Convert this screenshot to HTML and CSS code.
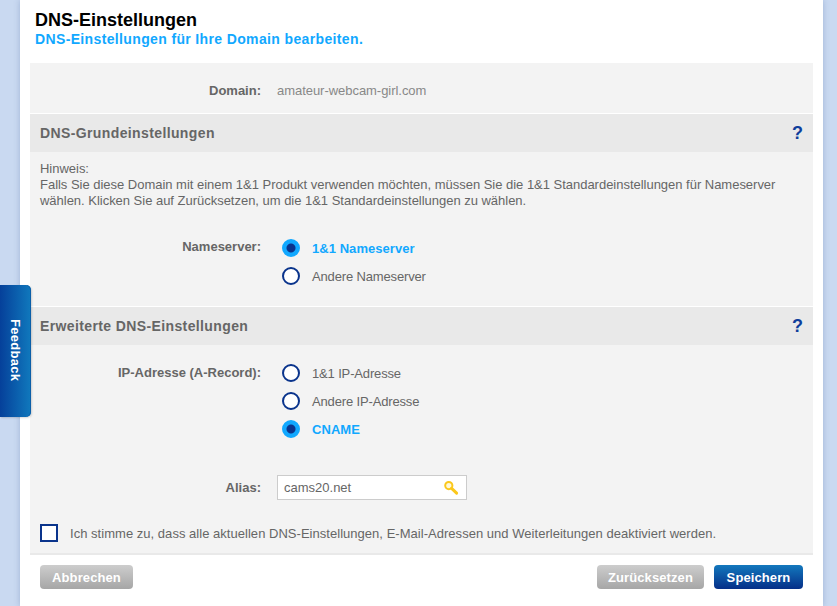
FILE: index.html
```html
<!DOCTYPE html>
<html lang="de">
<head>
    <meta charset="UTF-8">
    <title>DNS-Einstellungen</title>
    <link rel="stylesheet" href="styles.css">
</head>
<body>
    <a class="feedback" href="#"><span>Feedback</span></a>

    <div class="container">
        <div class="page-head">
            <h1>DNS-Einstellungen</h1>
            <p>DNS-Einstellungen für Ihre Domain bearbeiten.</p>
        </div>

        <div class="panel">
            <div class="row row-domain">
                <div class="label">Domain:</div>
                <div class="value">amateur-webcam-girl.com</div>
            </div>

            <div class="section-head">
                <h2>DNS-Grundeinstellungen</h2>
                <a class="help" href="#">?</a>
            </div>
            <div class="hint">
                Hinweis:<br>
                Falls Sie diese Domain mit einem 1&amp;1 Produkt verwenden möchten, müssen Sie die 1&amp;1 Standardeinstellungen für Nameserver wählen. Klicken Sie auf Zurücksetzen, um die 1&amp;1 Standardeinstellungen zu wählen.
            </div>
            <div class="row row-ns">
                <div class="label">Nameserver:</div>
                <div class="options">
                    <div class="option active"><span class="radio"></span>1&amp;1 Nameserver</div>
                    <div class="option"><span class="radio"></span>Andere Nameserver</div>
                </div>
            </div>

            <div class="section-head">
                <h2>Erweiterte DNS-Einstellungen</h2>
                <a class="help" href="#">?</a>
            </div>
            <div class="row row-ip">
                <div class="label">IP-Adresse (A-Record):</div>
                <div class="options">
                    <div class="option"><span class="radio"></span>1&amp;1 IP-Adresse</div>
                    <div class="option"><span class="radio"></span>Andere IP-Adresse</div>
                    <div class="option active"><span class="radio"></span>CNAME</div>
                </div>
            </div>
            <div class="row row-alias">
                <div class="label">Alias:</div>
                <div class="alias-box">
                    <span>cams20.net</span>
                    <svg class="key" width="16" height="16" viewBox="0 0 16 16">
                        <circle cx="5.8" cy="5.6" r="3.6" fill="#fff8d8" stroke="#fbc81c" stroke-width="2"/>
                        <path d="M8.6 8.4 L13.6 13.2" stroke="#fbc81c" stroke-width="3" stroke-linecap="round"/>
                    </svg>
                </div>
            </div>
            <div class="confirm">
                <span class="checkbox"></span>
                Ich stimme zu, dass alle aktuellen DNS-Einstellungen, E-Mail-Adressen und Weiterleitungen deaktiviert werden.
            </div>
        </div>

        <div class="buttons">
            <button class="btn btn-grey btn-cancel">Abbrechen</button>
            <div class="buttons-right">
                <button class="btn btn-grey btn-reset">Zurücksetzen</button>
                <button class="btn btn-blue btn-save">Speichern</button>
            </div>
        </div>
    </div>
</body>
</html>
```

FILE: styles.css
```css
html, body {
    margin: 0;
    height: 606px;
    overflow: hidden;
}

body {
    font-family: "Liberation Sans", Arial, sans-serif;
    font-size: 13px;
    color: #666;
    background-color: #c9d9f1;
}

.container {
    position: relative;
    width: 803px;
    height: 606px;
    margin-left: 20px;
    padding: 0 10px;
    box-sizing: border-box;
    background-color: #fff;
    box-shadow: 0 0 6px rgba(60,90,150,0.3);
}

.page-head {
    height: 63px;
    padding: 10px 5px 0;
    box-sizing: border-box;
}

h1 {
    margin: 0;
    font-size: 18px;
    line-height: 20px;
    color: #000;
}

.page-head p {
    margin: 0;
    font-size: 14px;
    line-height: 18px;
    font-weight: bold;
    letter-spacing: 0.36px;
    color: #11a8ff;
}

.panel {
    background-color: #f3f3f3;
    border-bottom: 2px solid #e9e9e9;
}

.row {
    display: flex;
}

.label {
    width: 231px;
    text-align: right;
    font-weight: bold;
    flex-shrink: 0;
}

.row-domain {
    height: 51px;
    padding-top: 20px;
    box-sizing: border-box;
    line-height: 15px;
    border-bottom: 1px solid #fff;
}

.value {
    margin-left: 16px;
    color: #888;
    letter-spacing: -0.04px;
}

.section-head {
    display: flex;
    justify-content: space-between;
    align-items: center;
    height: 38px;
    padding: 0 10px;
    background-color: #e9e9e9;
}

h2 {
    margin: 0;
    font-size: 14px;
    letter-spacing: 0.38px;
    color: #666;
}

.help {
    font-size: 18px;
    font-weight: bold;
    color: #0f3f9c;
    text-decoration: none;
}

.hint {
    padding: 9px 10px 0;
    height: 59px;
    line-height: 16px;
    letter-spacing: -0.02px;
}

.row-ns {
    height: 87px;
    padding-top: 14px;
    box-sizing: border-box;
    border-bottom: 1px solid #fff;
}

.row-ns .label {
    line-height: 26px;
}

.row-ip .label {
    line-height: 28px;
}

.options {
    margin-left: 21px;
}

.option {
    display: flex;
    align-items: center;
    height: 28px;
    letter-spacing: -0.15px;
}

.radio {
    width: 14px;
    height: 14px;
    margin-right: 12px;
    border: 2px solid #0a348c;
    border-radius: 50%;
    background-color: #fff;
}

.option.active {
    font-weight: bold;
    letter-spacing: 0.05px;
    color: #11a8ff;
}

.option.active .radio {
    border-color: #11a8ff;
    background: radial-gradient(circle, #0a348c 0, #0a348c 4px, #11a8ff 5px);
}

.row-ip {
    height: 116px;
    padding-top: 14px;
    box-sizing: border-box;
}

.row-alias {
    height: 52px;
    align-items: center;
}

.alias-box {
    display: flex;
    justify-content: space-between;
    align-items: center;
    width: 190px;
    height: 25px;
    margin-top: 1px;
    margin-left: 16px;
    padding: 0 7px 0 6px;
    box-sizing: border-box;
    border: 1px solid #ccc;
    background-color: #fff;
}

.confirm {
    display: flex;
    align-items: center;
    height: 40px;
    padding-left: 10px;
    box-sizing: border-box;
    letter-spacing: 0.03px;
}

.checkbox {
    width: 14px;
    height: 14px;
    margin-right: 12px;
    border: 2px solid #0a348c;
    background-color: #fff;
}

.buttons {
    display: flex;
    justify-content: space-between;
    padding: 10px 10px 0;
}

.buttons-right {
    display: flex;
    gap: 10px;
}

.btn {
    height: 24px;
    padding: 0;
    border: none;
    border-radius: 4px;
    font-family: inherit;
    font-size: 13px;
    font-weight: bold;
    letter-spacing: 0.1px;
    color: #fff;
    cursor: pointer;
}

.btn-cancel { width: 93px; }
.btn-reset { width: 107px; }
.btn-save { width: 89px; }

.btn-grey {
    background: linear-gradient(#cdcdcd, #a6a6a6);
}

.btn-blue {
    background: linear-gradient(#1378bd, #052f88);
}

/* Tab klebt am linken Fensterrand, liegt ueber dem Inhalt */
.feedback {
    position: absolute;
    left: 0;
    top: 285px;
    z-index: 2;
    width: 31px;
    height: 132px;
    padding-bottom: 2px;
    box-sizing: border-box;
    display: flex;
    align-items: center;
    justify-content: center;
    border-radius: 0 5px 5px 0;
    background: linear-gradient(to right, #05409a, #1079bd);
    box-shadow: inset -1px 0 0 #0b5fa8, 1px 1px 2px rgba(0,0,0,0.15);
    color: #fff;
    font-size: 13px;
    font-weight: bold;
    letter-spacing: 0.3px;
    text-decoration: none;
}

.feedback span {
    writing-mode: vertical-rl;
}
```
